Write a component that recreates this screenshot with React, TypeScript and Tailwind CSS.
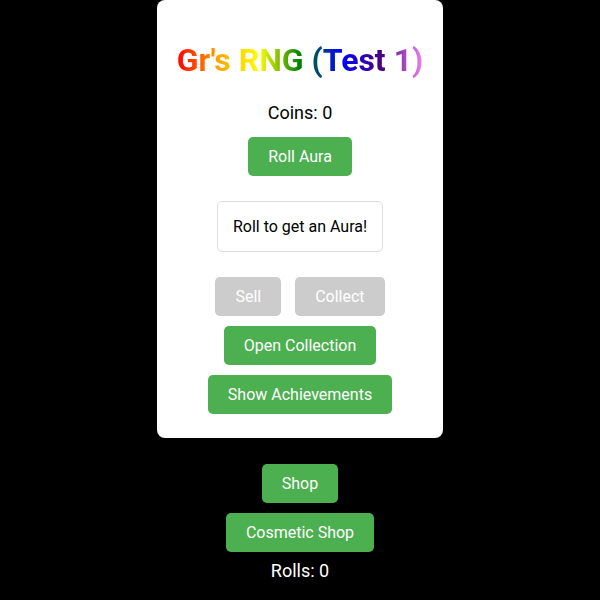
import React from 'react'

const greenBtn =
  'h-[39px] px-5 rounded-[5px] bg-[#4CAF50] text-white text-[16px] leading-none flex items-center justify-center'
const grayBtn =
  'h-[39px] px-5 rounded-[5px] bg-[#cccccc] text-white text-[16px] leading-none flex items-center justify-center'

export default function App() {
  return (
    <div
      className="min-h-screen w-full bg-black flex flex-col items-center"
      style={{ fontFamily: 'Roboto, "Liberation Sans", sans-serif' }}
    >
      {/* Main card */}
      <div className="w-[286px] bg-white rounded-[8px] flex flex-col items-center pt-[41px] pb-[24px]">
        <h1 className="text-[32px] font-bold leading-[38px] bg-[linear-gradient(to_right,red,orange,yellow,green,blue,indigo,violet)] bg-clip-text text-transparent">
          Gr's RNG (Test 1)
        </h1>
        <p className="mt-[23px] text-[18px] leading-[21px] text-black">Coins: 0</p>

        <button className={`${greenBtn} mt-[14px]`}>Roll Aura</button>

        <div className="mt-[25px] h-[51px] px-[15px] border border-[#dddddd] rounded-[5px] flex items-center text-[16px] text-black">
          Roll to get an Aura!
        </div>

        <div className="mt-[25px] flex gap-[14px]">
          <button className={grayBtn}>Sell</button>
          <button className={grayBtn}>Collect</button>
        </div>

        <button className={`${greenBtn} mt-[10px]`}>Open Collection</button>
        <button className={`${greenBtn} mt-[10px]`}>Show Achievements</button>
      </div>

      {/* Below card */}
      <button className={`${greenBtn} mt-[26px]`}>Shop</button>
      <button className={`${greenBtn} mt-[10px]`}>Cosmetic Shop</button>
      <p className="mt-[8px] text-[18px] leading-[21px] text-white">Rolls: 0</p>
    </div>
  )
}
